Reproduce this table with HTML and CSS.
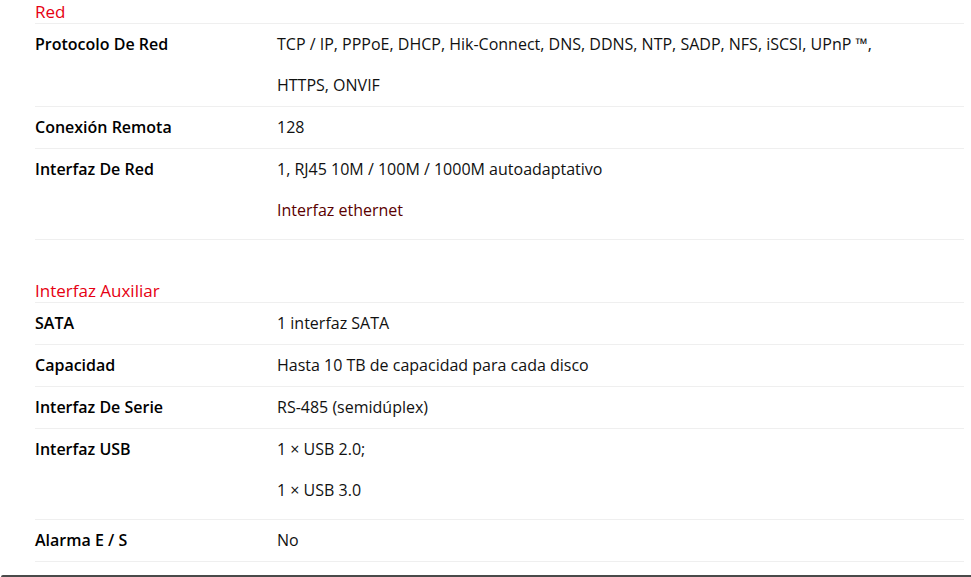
FILE: index.html
```html
<!DOCTYPE html>
<html lang="es">
<head>
<meta charset="utf-8">
<title>Especificaciones</title>
<link rel="stylesheet" href="styles.css">
</head>
<body>
<div class="page">
  <div class="specs">
    <div class="group-title">Red</div>
    <div class="row">
      <div class="label">Protocolo De Red</div>
      <div class="value">TCP / IP, PPPoE, DHCP, Hik-Connect, DNS, DDNS, NTP, SADP, NFS, iSCSI, UPnP ™, HTTPS, ONVIF</div>
    </div>
    <div class="row">
      <div class="label">Conexión Remota</div>
      <div class="value">128</div>
    </div>
    <div class="row row-multi">
      <div class="label">Interfaz De Red</div>
      <div class="value">
        <div>1, RJ45 10M / 100M / 1000M autoadaptativo</div>
        <div class="note">Interfaz ethernet</div>
      </div>
    </div>
    <div class="spacer"></div>
    <div class="group-title">Interfaz Auxiliar</div>
    <div class="row">
      <div class="label">SATA</div>
      <div class="value">1 interfaz SATA</div>
    </div>
    <div class="row">
      <div class="label">Capacidad</div>
      <div class="value">Hasta 10 TB de capacidad para cada disco</div>
    </div>
    <div class="row">
      <div class="label">Interfaz De Serie</div>
      <div class="value">RS-485 (semidúplex)</div>
    </div>
    <div class="row row-multi">
      <div class="label">Interfaz USB</div>
      <div class="value">
        <div>1 × USB 2.0;</div>
        <div>1 × USB 3.0</div>
      </div>
    </div>
    <div class="row">
      <div class="label">Alarma E / S</div>
      <div class="value">No</div>
    </div>
  </div>
  <div class="frame-bottom"></div>
</div>
</body>
</html>
```
FILE: styles.css
```css
html, body {
  margin: 0;
  padding: 0;
  background: #ffffff;
}
body {
  font-family: "Open Sans", "Liberation Sans", sans-serif;
  font-size: 16px;
  color: #111111;
}
.page {
  width: 971px;
  height: 577px;
  overflow: hidden;
  display: flex;
  flex-direction: column;
}
.specs {
  margin-left: 35px;
  width: 929px;
}
.group-title {
  color: #e60012;
  font-size: 17px;
  line-height: 23px;
  border-bottom: 1px solid #efefef;
}
.row {
  display: grid;
  grid-template-columns: 242px 1fr;
  line-height: 41px;
  border-bottom: 1px solid #efefef;
}
.row-multi {
  padding-bottom: 8px;
}
.label {
  font-weight: 600;
  color: #000000;
}
.value {
  color: #111111;
  max-width: 630px;
}
.note {
  color: #5a0000;
}
.spacer {
  height: 39px;
}
.frame-bottom {
  margin-top: 13px;
  margin-left: 1px;
  height: 0;
  border-top: 2px solid #4a4a4a;
  border-top-left-radius: 2px;
}
```
